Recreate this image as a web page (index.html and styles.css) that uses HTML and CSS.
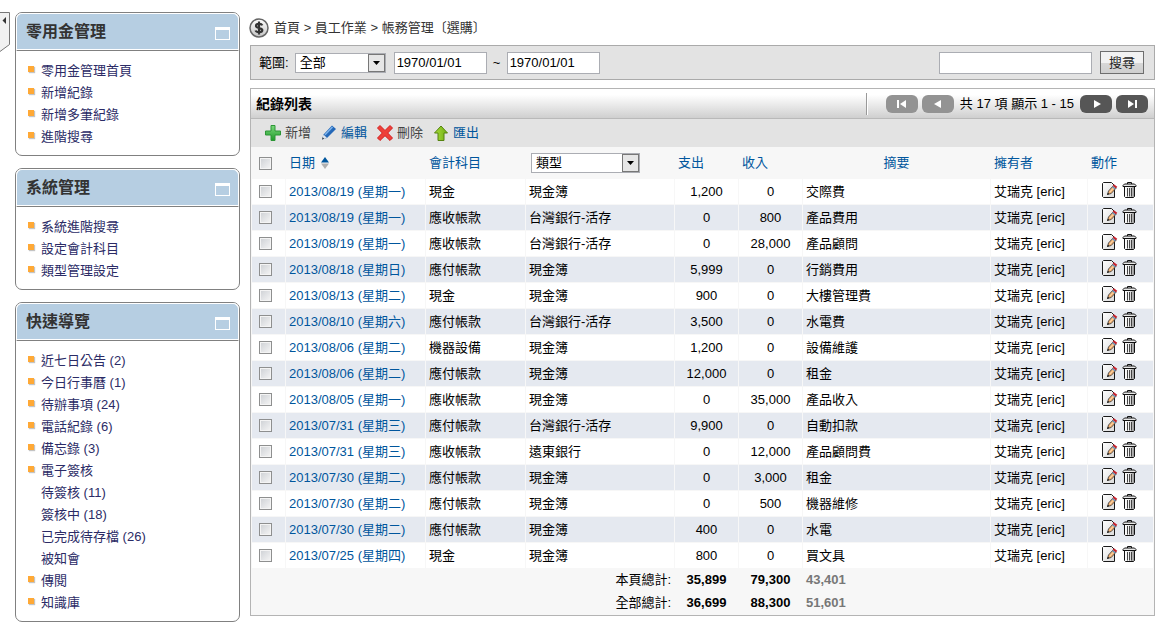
FILE: index.html
```
<!DOCTYPE html>
<html lang="zh-Hant">
<head>
<meta charset="utf-8">
<meta name="viewport" content="width=device-width, initial-scale=1">
<title>帳務管理</title>
<link rel="stylesheet" href="styles.css">
</head>
<body>
<svg class="defs" aria-hidden="true">
  <defs>
    <linearGradient id="bin-fill" x1="0" x2="1" y1="0" y2="0"><stop offset="0" stop-color="#fff"/><stop offset=".5" stop-color="#eee"/><stop offset="1" stop-color="#888"/></linearGradient>
    <linearGradient id="page-fill" x1="0" x2="1" y1="0" y2="1"><stop offset="0" stop-color="#fff"/><stop offset="1" stop-color="#dadada"/></linearGradient>
    <linearGradient id="coin-fill" x1="0" x2="0" y1="0" y2="1"><stop offset="0" stop-color="#fff"/><stop offset="1" stop-color="#c4c4c4"/></linearGradient>
    <linearGradient id="plus-fill" x1="0" x2="0" y1="0" y2="1"><stop offset="0" stop-color="#7bd87b"/><stop offset="1" stop-color="#1f9a2b"/></linearGradient>
    <linearGradient id="up-fill" x1="0" x2="1" y1="0" y2="0"><stop offset="0" stop-color="#a9dc3c"/><stop offset="1" stop-color="#6fae12"/></linearGradient>
    <symbol id="edit" viewBox="0 0 16 17">
      <path d="M1.500 .5H9.500L12.500 3.500V15.500H1.500L.5 14.500V1.500Z" fill="url(#page-fill)" stroke="#1a1a1a"/>
      <path d="M5.500 12.500 6.500 9 11.500 3.500 14.200 6 9.200 11.500Z" fill="#f4b273" stroke="#333" stroke-width=".8"/>
      <path d="M8 10 11.500 6" stroke="#fbd9ae"/>
      <path d="M10.500 4.500 13.200 7" stroke="#5b8fc4" stroke-width="1.200"/>
      <path d="M11.300 3 14.700 5.500" stroke="#c8232f" stroke-width="2"/>
      <path d="M5 13 6 10.800 7.200 12Z" fill="#111"/>
    </symbol>
    <symbol id="bin" viewBox="0 0 16 17">
      <path d="M5.500 2V.5H9.500V2" fill="none" stroke="#111"/>
      <path d="M2.500 4.500H12.500V14.500L11.500 15.500H3.500L2.500 14.500Z" fill="url(#bin-fill)" stroke="#111"/>
      <path d="M2.500 2H12.500L14 3.500V4.500H1V3.500Z" fill="#e8e8e8" stroke="#111"/>
      <path d="M5.500 6V14.500M7.500 6V14.500M9.500 6V14.500" stroke="#333" stroke-width=".9"/>
    </symbol>
  </defs>
</svg>

<div class="page">
  <button class="collapse" type="button" aria-label="收合側欄">
    <svg width="11" height="42" viewBox="0 0 11 42"><path d="M0 .5H9.500V32.500L0 39.500" fill="#f1f1f1" stroke="#777"/><path d="M6 5V12L2.500 8.500Z" fill="#333"/></svg>
  </button>

  <aside class="sidebar">
    <section class="box">
      <header class="box-head"><h2>零用金管理</h2><button class="fold" type="button" aria-label="收合"></button></header>
      <ul class="menu">
        <li><a href="#">零用金管理首頁</a></li>
        <li><a href="#">新增紀錄</a></li>
        <li><a href="#">新增多筆紀錄</a></li>
        <li><a href="#">進階搜尋</a></li>
      </ul>
    </section>
    <section class="box">
      <header class="box-head"><h2>系統管理</h2><button class="fold" type="button" aria-label="收合"></button></header>
      <ul class="menu">
        <li><a href="#">系統進階搜尋</a></li>
        <li><a href="#">設定會計科目</a></li>
        <li><a href="#">類型管理設定</a></li>
      </ul>
    </section>
    <section class="box">
      <header class="box-head"><h2>快速導覽</h2><button class="fold" type="button" aria-label="收合"></button></header>
      <ul class="menu">
        <li><a href="#">近七日公告 (2)</a></li>
        <li><a href="#">今日行事曆 (1)</a></li>
        <li><a href="#">待辦事項 (24)</a></li>
        <li><a href="#">電話紀錄 (6)</a></li>
        <li><a href="#">備忘錄 (3)</a></li>
        <li><a href="#">電子簽核</a></li>
        <li class="sub"><a href="#">待簽核 (11)</a></li>
        <li class="sub"><a href="#">簽核中 (18)</a></li>
        <li class="sub"><a href="#">已完成待存檔 (26)</a></li>
        <li class="sub"><a href="#">被知會</a></li>
        <li><a href="#">傳閱</a></li>
        <li><a href="#">知識庫</a></li>
      </ul>
    </section>
  </aside>

  <main class="main">
    <nav class="crumbs">
      <svg width="20" height="20" viewBox="0 0 20 20" aria-hidden="true"><circle cx="10" cy="10" r="9" fill="url(#coin-fill)" stroke="#666" stroke-width="1.500"/><path d="M13.300 7.300C12.600 5.600 7 5.200 7 7.900C7 10.300 13.300 9.500 13.300 12.200C13.300 14.800 7.300 14.600 6.600 12.500M10 3.500V16.500" fill="none" stroke="#333" stroke-width="2.200"/></svg>
      <span><a href="#">首頁</a> &gt; <a href="#">員工作業</a> &gt; <a href="#">帳務管理〔選購〕</a></span>
    </nav>

    <form class="filter">
      <label for="range">範圍:</label>
      <span class="pick pick-range"><select id="range"><option>全部</option></select><svg class="arrow" viewBox="0 0 17 18" aria-hidden="true"><rect x=".5" y=".5" width="16" height="17" fill="#e6e6e6" stroke="#777"/><path d="M5 7H12L8.500 11Z" fill="#000"/></svg></span>
      <input class="date" type="text" value="1970/01/01" aria-label="開始日期">
      <span class="tilde">~</span>
      <input class="date" type="text" value="1970/01/01" aria-label="結束日期">
      <input class="query" type="text" aria-label="關鍵字">
      <button class="search" type="submit">搜尋</button>
    </form>

    <section class="panel">
      <header class="panel-head">
        <h1>紀錄列表</h1>
        <div class="pager">
          <button type="button" disabled aria-label="第一頁"><svg viewBox="0 0 32 18"><path d="M12 5V13" stroke="#fff" stroke-width="2"/><path d="M20 5V13L14 9Z" fill="#fff"/></svg></button>
          <button type="button" disabled aria-label="上一頁"><svg viewBox="0 0 32 18"><path d="M19 5V13L12 9Z" fill="#fff"/></svg></button>
          <span class="count">共 17 項 顯示 1 - 15</span>
          <button type="button" aria-label="下一頁"><svg viewBox="0 0 32 18"><path d="M14 5V13L21 9Z" fill="#fff"/></svg></button>
          <button type="button" aria-label="最後一頁"><svg viewBox="0 0 32 18"><path d="M12 5V13L18 9Z" fill="#fff"/><path d="M20 5V13" stroke="#fff" stroke-width="2"/></svg></button>
        </div>
      </header>

      <div class="tools">
        <button type="button" class="muted"><svg width="18" height="18" viewBox="0 0 18 18"><path d="M7 1.500H11V7H16.500V11H11V16.500H7V11H1.500V7H7Z" fill="url(#plus-fill)" stroke="#2c9636"/></svg>新增</button>
        <button type="button"><svg width="18" height="18" viewBox="0 0 18 18"><path d="M2 15.500 3.500 10.500 12 1.500 16 5 7 14Z" fill="#2468b8"/><path d="M5 10.800 12.500 3" stroke="#7fb4ec" stroke-width="1.500"/><path d="M2 15.500 3.500 10.500 7 14Z" fill="#dfe5ec"/><path d="M2 15.500 2.700 13.300 4.200 14.700Z" fill="#333"/></svg>編輯</button>
        <button type="button" class="muted"><svg width="18" height="18" viewBox="0 0 18 18"><path d="M4 1.500 9 6.500 14 1.500 16.500 4 11.700 9 16.500 14 14 16.500 9 11.700 4 16.500 1.500 14 6.300 9 1.500 4Z" fill="#ee4039" stroke="#d32020"/></svg>刪除</button>
        <button type="button"><svg width="18" height="18" viewBox="0 0 18 18"><path d="M9 2 15.500 9H12V16.500H6V9H2.500Z" fill="url(#up-fill)" stroke="#55830f"/></svg>匯出</button>
      </div>

      <table class="grid">
        <colgroup><col class="c-check"><col class="c-date"><col class="c-account"><col class="c-type"><col class="c-money"><col class="c-money"><col class="c-note"><col class="c-owner"><col class="c-action"></colgroup>
        <thead>
          <tr>
            <th class="check"><input type="checkbox" aria-label="全選"></th>
            <th><a href="#">日期<svg class="sort" width="8" height="12" viewBox="0 0 8 12" aria-hidden="true"><path d="M4 0 8 5.500H0Z" fill="#00569d"/><path d="M4 12 8 6.500H0Z" fill="#b0b0b0"/></svg></a></th>
            <th><a href="#">會計科目</a></th>
            <th><span class="pick pick-type"><select aria-label="類型"><option>類型</option></select><svg class="arrow" viewBox="0 0 17 18" aria-hidden="true"><rect x=".5" y=".5" width="16" height="17" fill="#e6e6e6" stroke="#777"/><path d="M5 7H12L8.500 11Z" fill="#000"/></svg></span></th>
            <th><a href="#">支出</a></th>
            <th><a href="#">收入</a></th>
            <th class="mid">摘要</th>
            <th><a href="#">擁有者</a></th>
            <th>動作</th>
          </tr>
        </thead>
        <tbody>
          <tr><td class="check"><input type="checkbox" aria-label="選取"></td><td><a href="#">2013/08/19 (星期一)</a></td><td>現金</td><td>現金簿</td><td class="mid">1,200</td><td class="mid">0</td><td>交際費</td><td>艾瑞克 [eric]</td><td class="act"><button type="button" aria-label="編輯"><svg><use href="#edit"/></svg></button><button type="button" aria-label="刪除"><svg><use href="#bin"/></svg></button></td></tr>
          <tr><td class="check"><input type="checkbox" aria-label="選取"></td><td><a href="#">2013/08/19 (星期一)</a></td><td>應收帳款</td><td>台灣銀行-活存</td><td class="mid">0</td><td class="mid">800</td><td>產品費用</td><td>艾瑞克 [eric]</td><td class="act"><button type="button" aria-label="編輯"><svg><use href="#edit"/></svg></button><button type="button" aria-label="刪除"><svg><use href="#bin"/></svg></button></td></tr>
          <tr><td class="check"><input type="checkbox" aria-label="選取"></td><td><a href="#">2013/08/19 (星期一)</a></td><td>應收帳款</td><td>台灣銀行-活存</td><td class="mid">0</td><td class="mid">28,000</td><td>產品顧問</td><td>艾瑞克 [eric]</td><td class="act"><button type="button" aria-label="編輯"><svg><use href="#edit"/></svg></button><button type="button" aria-label="刪除"><svg><use href="#bin"/></svg></button></td></tr>
          <tr><td class="check"><input type="checkbox" aria-label="選取"></td><td><a href="#">2013/08/18 (星期日)</a></td><td>應付帳款</td><td>現金簿</td><td class="mid">5,999</td><td class="mid">0</td><td>行銷費用</td><td>艾瑞克 [eric]</td><td class="act"><button type="button" aria-label="編輯"><svg><use href="#edit"/></svg></button><button type="button" aria-label="刪除"><svg><use href="#bin"/></svg></button></td></tr>
          <tr><td class="check"><input type="checkbox" aria-label="選取"></td><td><a href="#">2013/08/13 (星期二)</a></td><td>現金</td><td>現金簿</td><td class="mid">900</td><td class="mid">0</td><td>大樓管理費</td><td>艾瑞克 [eric]</td><td class="act"><button type="button" aria-label="編輯"><svg><use href="#edit"/></svg></button><button type="button" aria-label="刪除"><svg><use href="#bin"/></svg></button></td></tr>
          <tr><td class="check"><input type="checkbox" aria-label="選取"></td><td><a href="#">2013/08/10 (星期六)</a></td><td>應付帳款</td><td>台灣銀行-活存</td><td class="mid">3,500</td><td class="mid">0</td><td>水電費</td><td>艾瑞克 [eric]</td><td class="act"><button type="button" aria-label="編輯"><svg><use href="#edit"/></svg></button><button type="button" aria-label="刪除"><svg><use href="#bin"/></svg></button></td></tr>
          <tr><td class="check"><input type="checkbox" aria-label="選取"></td><td><a href="#">2013/08/06 (星期二)</a></td><td>機器設備</td><td>現金簿</td><td class="mid">1,200</td><td class="mid">0</td><td>設備維護</td><td>艾瑞克 [eric]</td><td class="act"><button type="button" aria-label="編輯"><svg><use href="#edit"/></svg></button><button type="button" aria-label="刪除"><svg><use href="#bin"/></svg></button></td></tr>
          <tr><td class="check"><input type="checkbox" aria-label="選取"></td><td><a href="#">2013/08/06 (星期二)</a></td><td>應付帳款</td><td>現金簿</td><td class="mid">12,000</td><td class="mid">0</td><td>租金</td><td>艾瑞克 [eric]</td><td class="act"><button type="button" aria-label="編輯"><svg><use href="#edit"/></svg></button><button type="button" aria-label="刪除"><svg><use href="#bin"/></svg></button></td></tr>
          <tr><td class="check"><input type="checkbox" aria-label="選取"></td><td><a href="#">2013/08/05 (星期一)</a></td><td>應收帳款</td><td>現金簿</td><td class="mid">0</td><td class="mid">35,000</td><td>產品收入</td><td>艾瑞克 [eric]</td><td class="act"><button type="button" aria-label="編輯"><svg><use href="#edit"/></svg></button><button type="button" aria-label="刪除"><svg><use href="#bin"/></svg></button></td></tr>
          <tr><td class="check"><input type="checkbox" aria-label="選取"></td><td><a href="#">2013/07/31 (星期三)</a></td><td>應付帳款</td><td>台灣銀行-活存</td><td class="mid">9,900</td><td class="mid">0</td><td>自動扣款</td><td>艾瑞克 [eric]</td><td class="act"><button type="button" aria-label="編輯"><svg><use href="#edit"/></svg></button><button type="button" aria-label="刪除"><svg><use href="#bin"/></svg></button></td></tr>
          <tr><td class="check"><input type="checkbox" aria-label="選取"></td><td><a href="#">2013/07/31 (星期三)</a></td><td>應收帳款</td><td>遠東銀行</td><td class="mid">0</td><td class="mid">12,000</td><td>產品顧問費</td><td>艾瑞克 [eric]</td><td class="act"><button type="button" aria-label="編輯"><svg><use href="#edit"/></svg></button><button type="button" aria-label="刪除"><svg><use href="#bin"/></svg></button></td></tr>
          <tr><td class="check"><input type="checkbox" aria-label="選取"></td><td><a href="#">2013/07/30 (星期二)</a></td><td>應付帳款</td><td>現金簿</td><td class="mid">0</td><td class="mid">3,000</td><td>租金</td><td>艾瑞克 [eric]</td><td class="act"><button type="button" aria-label="編輯"><svg><use href="#edit"/></svg></button><button type="button" aria-label="刪除"><svg><use href="#bin"/></svg></button></td></tr>
          <tr><td class="check"><input type="checkbox" aria-label="選取"></td><td><a href="#">2013/07/30 (星期二)</a></td><td>應付帳款</td><td>現金簿</td><td class="mid">0</td><td class="mid">500</td><td>機器維修</td><td>艾瑞克 [eric]</td><td class="act"><button type="button" aria-label="編輯"><svg><use href="#edit"/></svg></button><button type="button" aria-label="刪除"><svg><use href="#bin"/></svg></button></td></tr>
          <tr><td class="check"><input type="checkbox" aria-label="選取"></td><td><a href="#">2013/07/30 (星期二)</a></td><td>應付帳款</td><td>現金簿</td><td class="mid">400</td><td class="mid">0</td><td>水電</td><td>艾瑞克 [eric]</td><td class="act"><button type="button" aria-label="編輯"><svg><use href="#edit"/></svg></button><button type="button" aria-label="刪除"><svg><use href="#bin"/></svg></button></td></tr>
          <tr><td class="check"><input type="checkbox" aria-label="選取"></td><td><a href="#">2013/07/25 (星期四)</a></td><td>現金</td><td>現金簿</td><td class="mid">800</td><td class="mid">0</td><td>買文具</td><td>艾瑞克 [eric]</td><td class="act"><button type="button" aria-label="編輯"><svg><use href="#edit"/></svg></button><button type="button" aria-label="刪除"><svg><use href="#bin"/></svg></button></td></tr>
        </tbody>
        <tfoot>
          <tr><td class="sum-label" colspan="4">本頁總計:</td><td class="mid sum">35,899</td><td class="mid sum">79,300</td><td class="sum net">43,401</td><td colspan="2"></td></tr>
          <tr><td class="sum-label" colspan="4">全部總計:</td><td class="mid sum">36,699</td><td class="mid sum">88,300</td><td class="sum net">51,601</td><td colspan="2"></td></tr>
        </tfoot>
      </table>
    </section>
  </main>
</div>
</body>
</html>
```

FILE: styles.css
```
* { box-sizing: border-box; }

body {
  margin: 0;
  background: #fff;
  color: #000;
  font: 13px/20px "Liberation Sans", "Noto Sans CJK TC", sans-serif;
}

a { color: inherit; text-decoration: none; }
button, input, select { font: inherit; color: inherit; margin: 0; }
button { padding: 0; border: 0; background: none; cursor: pointer; }
svg { display: block; flex: none; }
.defs { position: absolute; width: 0; height: 0; }

.page { display: flex; align-items: flex-start; padding: 12px 9px 0 0; }
.collapse { flex: none; width: 11px; margin-right: 4px; }

/* Sidebar */
.sidebar {
  flex: none;
  width: 225px;
  margin-right: 10px;
  display: flex;
  flex-direction: column;
  gap: 12px;
}
.box { border: 1px solid #808080; border-radius: 7px; padding-bottom: 7px; }
.box-head {
  display: flex;
  align-items: center;
  justify-content: space-between;
  height: 38px;
  padding: 0 8px 0 9px;
  background: #b6cee2;
  border: 1px solid #fff;
  border-bottom: 1px solid #808080;
  border-radius: 6px 6px 0 0;
  box-shadow: inset 0 -1px #fff;
}
.box-head h2 { margin: 0; font-size: 16px; line-height: 24px; color: #333; }
.fold { width: 15px; height: 13px; margin-top: 2px; border: 1px solid #fff; border-top-width: 3px; }
.menu { list-style: none; margin: 0; padding: 9px 0 0 12px; }
.menu li { display: flex; line-height: 22px; color: #2b2b66; }
.menu li::before {
  content: "";
  width: 6px;
  height: 6px;
  margin: 6px 7px 0 0;
  background: #ffa936;
  box-shadow: 1px 1px 1px #c4c4c4;
}
.menu .sub::before { visibility: hidden; }

/* Main column */
.main { flex: 1; min-width: 0; }
.crumbs { display: flex; align-items: center; gap: 5px; height: 33px; padding-bottom: 2px; color: #333; }
.crumbs svg { margin-left: -1px; }

.filter {
  display: flex;
  align-items: center;
  height: 35px;
  padding: 0 10px 0 8px;
  margin-bottom: 8px;
  background: #e3e3e3;
  border: 1px solid #aaa;
}
.filter input { height: 22px; padding: 0 2px; background: #fff; border: 1px solid #abadb3; border-radius: 0; }
.filter .date { width: 93px; }
.filter .query { flex: 0 1 153px; min-width: 0; margin-left: auto; }
.tilde { width: 20px; text-align: center; }
.search {
  flex: none;
  width: 44px;
  height: 23px;
  margin-left: 8px;
  border: 1px solid #6e6e6e;
  background: linear-gradient(#f2f2f2 50%, #d8d8d8 50%, #cfcfcf);
  color: #222;
}

.pick { position: relative; display: inline-flex; }
.pick-range { width: 91px; margin: 0 8px 0 6px; }
.pick-type { width: 109px; margin-left: 2px; }
.pick select {
  appearance: none;
  width: 100%;
  height: 20px;
  padding: 0 20px 0 4px;
  line-height: 18px;
  border: 1px solid #abadb3;
  border-radius: 0;
  background: #fff;
}
.arrow { position: absolute; top: 1px; right: 1px; width: 17px; height: 18px; pointer-events: none; }

/* Record list */
.panel { border: 1px solid #b4b4b4; background: #e3e3e3; }
.panel-head {
  display: flex;
  align-items: center;
  justify-content: space-between;
  height: 30px;
  padding: 0 6px 0 5px;
  background: linear-gradient(#fff 20%, #cfcfcf);
  border-bottom: 1px solid #b9b9b9;
}
.panel-head h1 { margin: 0; font-size: 14px; line-height: 20px; }
.pager {
  display: flex;
  align-items: center;
  gap: 4px;
  height: 22px;
  padding-left: 19px;
  border-left: 1px solid #999;
  box-shadow: inset 1px 0 #fff;
}
.pager button { width: 32px; height: 18px; border-radius: 6px; background: #565656; }
.pager button:disabled { background: #939393; }
.count { padding: 0 2px; }

.tools { display: flex; align-items: center; gap: 9px; height: 28px; padding-left: 13px; color: #00569d; }
.tools button { display: flex; align-items: center; gap: 3px; }
.tools .muted { color: #444; }

.grid { width: 100%; table-layout: fixed; border-spacing: 1px; background: #f7f7f7; }
.c-check { width: 33px; }
.c-date { width: 139px; }
.c-account { width: 99px; }
.c-type { width: 148px; }
.c-money { width: 63px; }
.c-owner { width: 96px; }
.c-action { width: 65px; }

.grid th, .grid td { padding: 0 3px; text-align: left; white-space: nowrap; }
.grid th { height: 30px; font-weight: normal; color: #00569d; }
.grid th a { display: flex; align-items: center; }
.grid th select { color: #000; }
.sort { margin-left: 6px; }
.grid tbody td { height: 25px; background: #fff; }
.grid tbody tr:nth-child(even) td { background: #e5e9f0; }
.grid tbody a { color: #00569d; }
.grid .mid { text-align: center; }
.grid .check { padding: 0 0 0 7px; }
.grid .check input {
  appearance: none;
  display: block;
  width: 13px;
  height: 13px;
  border: 1px solid #8e8f8f;
  background: linear-gradient(135deg, #cdd0d4, #f6f6f6);
  box-shadow: inset 0 0 0 1px #f4f4f4;
}
.grid .act { padding: 0 0 4px 14px; line-height: 18px; }
.act button { display: inline-block; width: 16px; height: 17px; margin-right: 4px; vertical-align: middle; }
.act svg { width: 16px; height: 17px; }
.grid tfoot td { height: 22px; }
.grid tfoot .sum { font-weight: bold; }
.grid tfoot .net { color: #777; }
.grid tfoot .sum-label { text-align: right; }
```
